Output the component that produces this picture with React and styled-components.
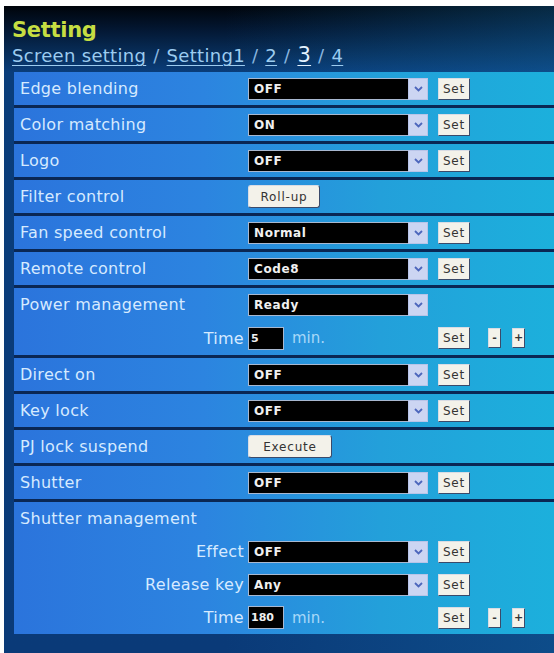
import React from "react";
import styled, { createGlobalStyle } from "styled-components";

const GlobalStyle = createGlobalStyle`
    body {
        margin: 0;
        background: #ffffff;
        font-family: "DejaVu Sans", "Liberation Sans", sans-serif;
    }
`;

const Page = styled.div`
    padding: 6px 0 0 4px;
`;

const Panel = styled.div`
    width: 550px;
    height: 647px;
    box-sizing: border-box;
    padding-top: 8px;
    background:
        linear-gradient(90deg, rgba(0, 0, 0, 0) 40%, rgba(20, 110, 170, 0.35) 100%),
        linear-gradient(180deg, #00040a 0px, #031630 22px, #08305e 50px, #0a3d7a 66px, #0a3a78 100%);
    overflow: hidden;
`;

const Header = styled.div`
    box-sizing: border-box;
    padding: 3px 0 0 8px;
    height: 58px;
`;

const Title = styled.div`
    font-family: "DejaVu Sans", sans-serif;
    font-weight: bold;
    font-size: 21px;
    line-height: 26px;
    color: #c6de42;
    letter-spacing: -0.3px;
`;

const Crumbs = styled.div`
    display: flex;
    align-items: baseline;
    font-size: 18px;
    line-height: 24px;
    color: #9cccf0;
    letter-spacing: 0.3px;
`;

const Crumb = styled.span`
    text-decoration: underline;
    text-underline-offset: 3px;
    text-decoration-thickness: 1px;
    color: ${({ current }) => (current ? "#e4f2ff" : "#9cccf0")};
    font-size: ${({ current }) => (current ? "21px" : "18px")};
`;

const Slash = styled.span`
    padding: 0 7px;
    color: #8ab8e0;
`;

const RowList = styled.div`
    margin-left: 10px;
    display: flex;
    flex-direction: column;
    gap: 3px;
    background: #0a2754;
`;

const Row = styled.div`
    display: grid;
    grid-template-columns: 234px 1fr;
    grid-auto-rows: ${({ lineHeight }) => lineHeight || "33px"};
    align-items: center;
    background: linear-gradient(90deg, #2b74dc 0%, #2c84e0 35%, #23a0da 68%, #1cb0dc 100%);
`;

const Label = styled.div`
    grid-column: 1;
    padding-left: 6px;
    font-size: 16px;
    letter-spacing: 0.3px;
    color: #d6eaff;
    white-space: nowrap;
`;

const SubLabel = styled(Label)`
    text-align: right;
    padding: 0 4px 0 0;
`;

const Controls = styled.div`
    grid-column: 2;
    display: flex;
    align-items: center;
`;

const SelectBox = styled.div`
    display: flex;
    width: 180px;
    height: 22px;
`;

const SelectValue = styled.div`
    flex: 1;
    box-sizing: border-box;
    background: #000000;
    border: 1px solid #a8b8d0;
    border-right: none;
    padding-left: 5px;
    font-size: 12px;
    font-weight: bold;
    line-height: 20px;
    color: #f0f0f0;
    letter-spacing: 0.6px;
`;

const SelectArrow = styled.div`
    width: 20px;
    display: flex;
    align-items: center;
    justify-content: center;
    background: #ccd5f2;
    border: 1px solid #b8c4e8;
    box-sizing: border-box;
`;

const Button = styled.div`
    box-sizing: border-box;
    height: ${({ h }) => h || "22px"};
    width: ${({ w }) => w};
    margin-left: ${({ ml }) => ml || "0"};
    display: flex;
    align-items: center;
    justify-content: center;
    background: #f3f2ea;
    border: 1px solid #d8dce4;
    border-right-color: #3a4a6a;
    border-bottom-color: #3a4a6a;
    border-radius: ${({ round }) => (round ? "3px" : "1px")};
    font-size: 12px;
    letter-spacing: 0.8px;
    color: #333333;
`;

const TimeGroup = styled.div`
    width: 180px;
    display: flex;
    align-items: center;
`;

const NumberInput = styled.div`
    box-sizing: border-box;
    width: 36px;
    height: 23px;
    background: #000000;
    border: 1px solid #a8b8d0;
    padding-left: 2px;
    font-size: 11px;
    font-weight: bold;
    line-height: 21px;
    color: #f0f0f0;
`;

const Unit = styled.span`
    margin-left: 8px;
    font-size: 15px;
    color: #a8d8f8;
`;

const StepButton = styled(Button)`
    font-size: 11px;
    font-weight: bold;
    letter-spacing: 0;
    padding-bottom: 1px;
`;

const Chevron = () => (
    <svg width="9" height="6" viewBox="0 0 9 6">
        <path d="M1 1 L4.5 4.5 L8 1" fill="none" stroke="#4d66bc" strokeWidth="1.8" />
    </svg>
);

const Select = ({ value, withSet = true }) => (
    <Controls>
        <SelectBox>
            <SelectValue>{value}</SelectValue>
            <SelectArrow>
                <Chevron />
            </SelectArrow>
        </SelectBox>
        {withSet && <Button w="32px" ml="10px">Set</Button>}
    </Controls>
);

const TimeControl = ({ value }) => (
    <Controls>
        <TimeGroup>
            <NumberInput>{value}</NumberInput>
            <Unit>min.</Unit>
        </TimeGroup>
        <Button w="32px" ml="10px">Set</Button>
        <StepButton w="13px" h="20px" ml="18px">-</StepButton>
        <StepButton w="13px" h="20px" ml="11px">+</StepButton>
    </Controls>
);

const simpleRows = [
    { label: "Edge blending", value: "OFF" },
    { label: "Color matching", value: "ON" },
    { label: "Logo", value: "OFF" },
    { label: "Filter control", button: "Roll-up", width: "72px" },
    { label: "Fan speed control", value: "Normal" },
    { label: "Remote control", value: "Code8" },
];

const lowerRows = [
    { label: "Direct on", value: "OFF" },
    { label: "Key lock", value: "OFF" },
    { label: "PJ lock suspend", button: "Execute", width: "84px" },
    { label: "Shutter", value: "OFF" },
];

const SimpleRow = ({ item }) => (
    <Row>
        <Label>{item.label}</Label>
        {item.button ? (
            <Controls>
                <Button w={item.width} h="23px" round>{item.button}</Button>
            </Controls>
        ) : (
            <Select value={item.value} />
        )}
    </Row>
);

export default function App() {
    return (
        <Page>
            <GlobalStyle />
            <Panel>
                <Header>
                    <Title>Setting</Title>
                    <Crumbs>
                        <Crumb>Screen setting</Crumb>
                        <Slash>/</Slash>
                        <Crumb>Setting1</Crumb>
                        <Slash>/</Slash>
                        <Crumb>2</Crumb>
                        <Slash>/</Slash>
                        <Crumb current>3</Crumb>
                        <Slash>/</Slash>
                        <Crumb>4</Crumb>
                    </Crumbs>
                </Header>

                <RowList>
                    {simpleRows.map((item) => (
                        <SimpleRow key={item.label} item={item} />
                    ))}

                    <Row lineHeight="33.5px">
                        <Label>Power management</Label>
                        <Select value="Ready" withSet={false} />
                        <SubLabel>Time</SubLabel>
                        <TimeControl value="5" />
                    </Row>

                    {lowerRows.map((item) => (
                        <SimpleRow key={item.label} item={item} />
                    ))}

                    <Row>
                        <Label>Shutter management</Label>
                        <div />
                        <SubLabel>Effect</SubLabel>
                        <Select value="OFF" />
                        <SubLabel>Release key</SubLabel>
                        <Select value="Any" />
                        <SubLabel>Time</SubLabel>
                        <TimeControl value="180" />
                    </Row>
                </RowList>
            </Panel>
        </Page>
    );
}
